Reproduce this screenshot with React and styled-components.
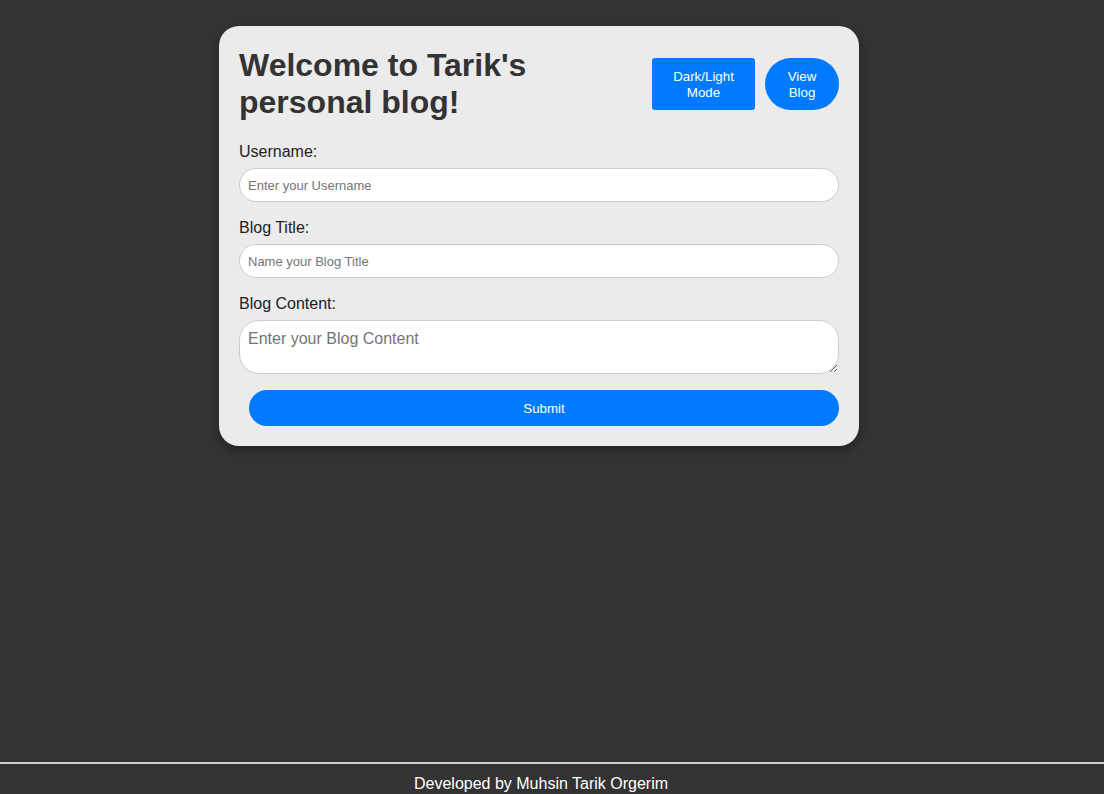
import React from "react";
import styled, { createGlobalStyle } from "styled-components";

const GlobalStyle = createGlobalStyle`
  * { box-sizing: border-box; }
  body {
    margin: 0;
    background: #333333;
    font-family: "Liberation Sans", Arial, sans-serif;
  }
`;

export default function App() {
  return (
    <Page>
      <GlobalStyle />
      <Main>
        <Card>
          <Header>
            <Title>Welcome to Tarik's personal blog!</Title>
            <Actions>
              <ModeButton>Dark/Light Mode</ModeButton>
              <ViewButton>View Blog</ViewButton>
            </Actions>
          </Header>
          <Form onSubmit={e => e.preventDefault()}>
            <Label htmlFor="username">Username:</Label>
            <Input id="username" placeholder="Enter your Username" />
            <Label htmlFor="title">Blog Title:</Label>
            <Input id="title" placeholder="Name your Blog Title" />
            <Label htmlFor="content">Blog Content:</Label>
            <TextArea id="content" placeholder="Enter your Blog Content" />
            <SubmitButton type="submit">Submit</SubmitButton>
          </Form>
        </Card>
      </Main>
      <Footer>Developed by Muhsin Tarik Orgerim</Footer>
    </Page>
  );
}

const Page = styled.div`
  min-height: 100vh;
  display: flex;
  flex-direction: column;
`;

const Main = styled.main`
  flex: 1;
  display: flex;
  justify-content: center;
  align-items: flex-start;
  padding: 26px 26px 0 0;
`;

const Card = styled.section`
  width: 640px;
  padding: 20px;
  background: #ebebeb;
  border-radius: 20px;
  box-shadow: 0 4px 10px rgba(0, 0, 0, 0.35);
`;

const Header = styled.div`
  display: flex;
  justify-content: space-between;
  align-items: center;
  padding-top: 1px;
  margin-bottom: 21px;
`;

const Title = styled.h1`
  margin: 0;
  max-width: 400px;
  font-size: 32px;
  line-height: 37px;
  font-weight: bold;
  color: #333333;
`;

const Actions = styled.div`
  display: flex;
  gap: 10px;
`;

const BaseButton = styled.button`
  border: none;
  background: #007bff;
  color: #ffffff;
  font-family: "Liberation Sans", Arial, sans-serif;
  font-size: 13.33px;
  line-height: 16px;
  cursor: pointer;
`;

const ModeButton = styled(BaseButton)`
  width: 103px;
  height: 52px;
  padding: 11px 18px 9px;
  border-radius: 3px;
`;

const ViewButton = styled(BaseButton)`
  width: 74px;
  height: 52px;
  padding: 11px 18px 9px;
  border-radius: 26px;
`;

const Form = styled.form`
  display: flex;
  flex-direction: column;
`;

const Label = styled.label`
  display: block;
  font-size: 16px;
  line-height: 19px;
  color: #222222;
  margin-bottom: 7px;
`;

const Input = styled.input`
  width: 100%;
  height: 34px;
  padding: 0 8px;
  margin-bottom: 16px;
  border: 1px solid #cccccc;
  border-radius: 17px;
  background: #ffffff;
  font-family: "Liberation Sans", Arial, sans-serif;
  font-size: 13px;
  outline: none;
  &::placeholder { color: #757575; }
`;

const TextArea = styled.textarea`
  width: 100%;
  height: 54px;
  padding: 9px 8px 6px;
  margin: 0 0 16px;
  border: 1px solid #cccccc;
  border-radius: 20px;
  background: #ffffff;
  font-family: "Liberation Sans", Arial, sans-serif;
  font-size: 16px;
  outline: none;
  &::placeholder { color: #757575; }
`;

const SubmitButton = styled(BaseButton)`
  margin-left: 10px;
  height: 36px;
  padding-top: 2px;
  border-radius: 18px;
`;

const Footer = styled.footer`
  border-top: 2px solid #d0d0d0;
  padding: 11px 22px 1px 0;
  text-align: center;
  color: #ffffff;
  font-size: 16px;
  line-height: 18px;
`;
